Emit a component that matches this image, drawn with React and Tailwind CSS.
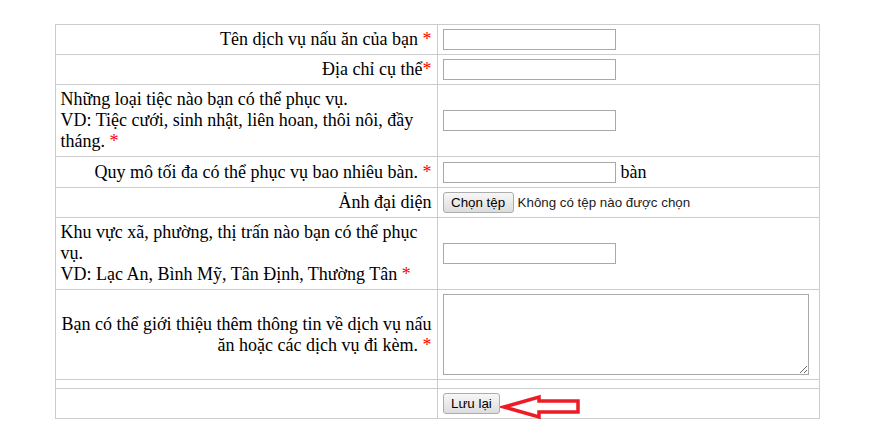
import React from "react";

const Star = ({ space = true }) => (
  <span className="text-[#ff0000]">{space ? " *" : "*"}</span>
);

const TextInput = () => (
  <input
    type="text"
    className="box-border block h-[21px] w-[173px] border border-[#a9a9a9] bg-white px-[2px] outline-none"
  />
);

const btn =
  "box-border h-[21px] rounded-[3px] border border-[#acacac] bg-gradient-to-b from-[#f7f7f7] to-[#dddddd] px-[7.5px] text-[13.33px] leading-[19px] text-black [font-family:'Liberation_Sans',Arial,sans-serif]";

export default function App() {
  const td = "border border-[#cccccc] px-[5px] py-[4px] align-middle";
  return (
    <div className="min-h-[437px] w-[874px] bg-white pt-[24px] text-[18px] leading-[21px] text-black [font-family:'Liberation_Serif','Times_New_Roman',serif]">
      <table className="mx-auto w-[764px] table-fixed border-collapse">
        <colgroup>
          <col className="w-[382px]" />
          <col className="w-[382px]" />
        </colgroup>
        <tbody>
          <tr>
            <td className={td + " text-right"}>
              Tên dịch vụ nấu ăn của bạn<Star />
            </td>
            <td className={td}>
              <TextInput />
            </td>
          </tr>
          <tr>
            <td className={td + " text-right"}>
              Địa chỉ cụ thể<Star space={false} />
            </td>
            <td className={td}>
              <TextInput />
            </td>
          </tr>
          <tr>
            <td className={td + " text-left"}>
              Những loại tiệc nào bạn có thể phục vụ.
              <br />
              VD: Tiệc cưới, sinh nhật, liên hoan, thôi nôi, đầy
              <br />
              tháng.<Star />
            </td>
            <td className={td}>
              <TextInput />
            </td>
          </tr>
          <tr>
            <td className={td + " text-right"}>
              Quy mô tối đa có thể phục vụ bao nhiêu bàn.<Star />
            </td>
            <td className={td}>
              <div className="flex h-[22px] items-center gap-[5px]">
                <TextInput />
                <span>bàn</span>
              </div>
            </td>
          </tr>
          <tr>
            <td className={td + " text-right"}>Ảnh đại diện</td>
            <td className={td}>
              <div className="flex h-[21px] items-center">
                <button type="button" className={btn}>
                  Chọn tệp
                </button>
                <span className="ml-[4px] text-[13.33px] leading-[21px] text-[#222] [font-family:'Liberation_Sans',Arial,sans-serif]">
                  Không có tệp nào được chọn
                </span>
              </div>
            </td>
          </tr>
          <tr>
            <td className={td + " text-left"}>
              Khu vực xã, phường, thị trấn nào bạn có thể phục
              <br />
              vụ.
              <br />
              VD: Lạc An, Bình Mỹ, Tân Định, Thường Tân<Star />
            </td>
            <td className={td}>
              <TextInput />
            </td>
          </tr>
          <tr>
            <td className={td + " text-right"}>
              Bạn có thể giới thiệu thêm thông tin về dịch vụ nấu
              <br />
              ăn hoặc các dịch vụ đi kèm.<Star />
            </td>
            <td className={td}>
              <textarea className="box-border block h-[81px] w-[366px] border border-[#a9a9a9] bg-white outline-none" />
            </td>
          </tr>
          <tr>
            <td className={td + " h-[9px]"}></td>
            <td className={td + " h-[9px]"}></td>
          </tr>
          <tr>
            <td className={td}></td>
            <td className={td + " relative"}>
              <div className="flex h-[21px] items-center">
                <button type="button" className={btn}>
                  Lưu lại
                </button>
              </div>
              <svg
                className="absolute left-[62px] top-[4px]"
                width="84"
                height="28"
                viewBox="0 0 84 28"
              >
                <polygon
                  points="4,14 39,4 39,8 78,8 78,19 39,19 39,24"
                  fill="none"
                  stroke="#ed1c24"
                  strokeWidth="3.5"
                  strokeLinejoin="miter"
                />
              </svg>
            </td>
          </tr>
        </tbody>
      </table>
    </div>
  );
}
